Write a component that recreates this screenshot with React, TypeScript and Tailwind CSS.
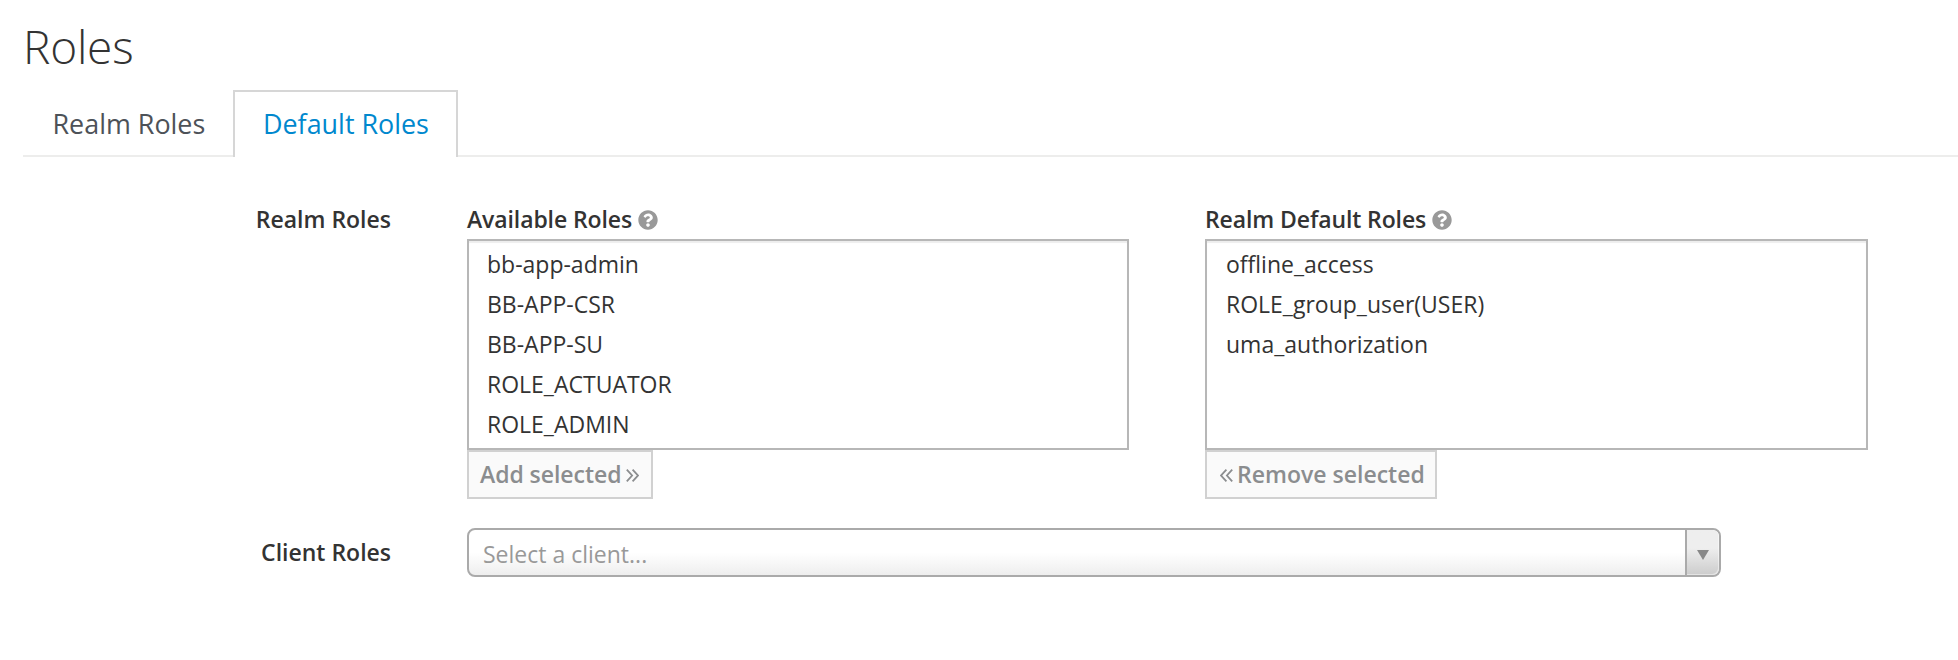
import { FaQuestionCircle } from "react-icons/fa";

const availableRoles = ["bb-app-admin", "BB-APP-CSR", "BB-APP-SU", "ROLE_ACTUATOR", "ROLE_ADMIN"];
const defaultRoles = ["offline_access", "ROLE_group_user(USER)", "uma_authorization"];

function ListLabel({ text }: { text: string }) {
  return (
    <div className="flex h-[38px] items-start leading-[36px] font-semibold">
      <span className="tracking-[-0.1px]">{text}</span>
      <FaQuestionCircle className="mt-[9px] ml-[5.5px] h-5 w-5 shrink-0 text-[#999999]" />
    </div>
  );
}

function Chevrons({ left = false }: { left?: boolean }) {
  return (
    <svg
      viewBox="0 0 13 13"
      className={left ? "mt-[3px] h-[13px] w-[13px] rotate-180" : "mt-[3px] h-[13px] w-[13px]"}
      aria-hidden="true"
    >
      <path d="M.8.7l5.3 5.8L.8 12.3M6.6.7l5.3 5.8-5.3 5.8" fill="none" stroke="#8b8d8f" strokeWidth="1.8" />
    </svg>
  );
}

function RoleList({ roles, className }: { roles: string[]; className: string }) {
  return (
    <ul className={`h-[211px] border-2 border-[#b7b7b7] pt-[3px] shadow-[inset_0_2px_1px_rgba(3,3,3,0.07)] ${className}`}>
      {roles.map((role) => (
        <li key={role} className="h-10 leading-[40px]">
          {role}
        </li>
      ))}
    </ul>
  );
}

export default function App() {
  return (
    <main className="h-[660px] w-[1958px] overflow-hidden bg-white pt-[14px] pl-[23px] font-['Open_Sans',sans-serif] text-[23px] text-[#333333]">
      <h1 className="h-[76px] text-[46px] leading-[64px] font-light -tracking-[0.2px]">Roles</h1>
      <nav className="flex h-[67px] border-b-2 border-[#ededec] text-[26.9px]">
        <a className="w-[210px] pl-[29.5px] leading-[67px] text-[#4d5258]">Realm Roles</a>
        <a className="h-[67px] w-[225px] border-2 border-b-0 border-[#d6d6d6] bg-white pl-[28px] leading-[63px] text-[#0088ce]">
          Default Roles
        </a>
      </nav>
      <section className="mt-[44px] flex">
        <h2 className="w-[368px] text-right leading-[36px] font-semibold">Realm Roles</h2>
        <div className="ml-[76px] w-[738px]">
          <ListLabel text="Available Roles" />
          <RoleList roles={availableRoles} className="w-[662px] pl-[18px]" />
          <button className="flex h-[49px] w-[186px] items-center gap-[4.6px] border-2 border-[#d1d1d1] bg-[#fafafa] pb-px pl-[11px] leading-[36px] font-semibold text-[#8b8d8f]">
            <span className="tracking-[-0.05px]">Add selected</span>
            <Chevrons />
          </button>
        </div>
        <div>
          <ListLabel text="Realm Default Roles" />
          <RoleList roles={defaultRoles} className="w-[663px] pl-[19px]" />
          <button className="flex h-[49px] w-[232px] items-center gap-[4.6px] border-2 border-[#d1d1d1] bg-[#fafafa] pb-px pl-[12.5px] leading-[36px] font-semibold text-[#8b8d8f]">
            <Chevrons left />
            <span>Remove selected</span>
          </button>
        </div>
      </section>
      <section className="mt-[29px] flex">
        <h2 className="w-[368px] text-right leading-[49px] font-semibold">Client Roles</h2>
        <div className="ml-[76px] flex h-[49px] w-[1254px] overflow-hidden rounded-lg border-2 border-[#aaaaaa] bg-linear-to-t from-[#eeeeee] to-white to-50%">
          <div className="flex-1 pl-[14px] leading-[49px] text-[#999999]">Select a client...</div>
          <div className="flex w-[34px] items-center justify-center rounded-r-md border-l-2 border-[#aaaaaa] bg-linear-to-t from-[#cccccc] to-[#eeeeee] to-60% shadow-[inset_-1px_-1px_0_rgba(255,255,255,0.45)]">
            <svg viewBox="0 0 12 10" className="mt-1 h-[10px] w-3" aria-hidden="true">
              <path d="M0 0h12L6 10z" fill="#888888" />
            </svg>
          </div>
        </div>
      </section>
    </main>
  );
}
